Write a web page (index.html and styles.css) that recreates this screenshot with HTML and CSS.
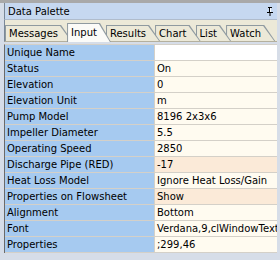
FILE: index.html
```html
<!DOCTYPE html>
<html>
<title>Data Palette</title>

<head>
    <link rel="stylesheet" href="styles.css">
</head>

<body>

    <div class="palette">
        <div class="titlebar">
            <span class="title">Data Palette</span>
            <svg class="pin" width="6" height="9" viewBox="0 0 6 9">
                <path d="M1 0h4v1h-1v4h2v1h-2.5v3h-1v-3h-2.5v-1h2v-4h-1z" fill="#000"/>
                <rect x="3" y="1" width="1" height="4" fill="#fff"/>
            </svg>
        </div>

        <div class="tabs">
            <div class="tab">Messages</div>
            <div class="tab active">Input</div>
            <div class="tab">Results</div>
            <div class="tab">Chart</div>
            <div class="tab">List</div>
            <div class="tab">Watch</div>
        </div>

        <!-- property grid -->
        <div class="grid">
            <div class="name">Unique Name</div><div class="value blank"></div>
            <div class="name">Status</div><div class="value">On</div>
            <div class="name">Elevation</div><div class="value">0</div>
            <div class="name">Elevation Unit</div><div class="value">m</div>
            <div class="name">Pump Model</div><div class="value">8196 2x3x6</div>
            <div class="name">Impeller Diameter</div><div class="value">5.5</div>
            <div class="name">Operating Speed</div><div class="value">2850</div>
            <div class="name">Discharge Pipe (RED)</div><div class="value hot">-17</div>
            <div class="name">Heat Loss Model</div><div class="value">Ignore Heat Loss/Gain</div>
            <div class="name">Properties on Flowsheet</div><div class="value hot">Show</div>
            <div class="name">Alignment</div><div class="value">Bottom</div>
            <div class="name">Font</div><div class="value">Verdana,9,clWindowText</div>
            <div class="name">Properties</div><div class="value">;299,46</div>
        </div>
    </div>

</body>

</html>
```

FILE: styles.css
```css
* {
    box-sizing: border-box;
}

body {
    margin: 0;
    background: #ffffff;
    font-family: "DejaVu Sans", Verdana, sans-serif;
    font-size: 10px;
    color: #000;
}

.palette {
    width: 280px;
    height: 260px;
    background: #d6dde8;
    border-top: 3px solid #a9a9a9;
    padding-left: 4px;
    padding-right: 3px;
    overflow: hidden;
}

/* Title bar */

.titlebar {
    display: flex;
    align-items: center;
    justify-content: space-between;
    height: 17px;
    padding: 0 4px 0 3px;
    background: #c6d8f0;
    border-left: 1px solid #7a8898;
    border-bottom: 1px solid #b0bccc;
}

.pin {
    display: block;
}

/* Tabs */

.tabs {
    display: flex;
    align-items: flex-end;
    height: 22px;
    background: #ece9d8;
    border-left: 1px solid #7a8898;
    border-bottom: 1px solid #b4b09e;
}

.tab {
    position: relative;
    height: 16px;
    line-height: 15px;
    padding: 1px 14px 0 4px;
    margin-right: -5px;
    white-space: nowrap;
}

.tab::before,
.tab::after {
    content: "";
    position: absolute;
    z-index: -1;
    clip-path: polygon(0 0, calc(100% - 11px) 0, 100% 100%, 0 100%);
}

.tab::before {
    inset: 0;
    background: #8f9aa0;
}

.tab::after {
    inset: 1px 1px 0 1px;
    background: #ece9d8;
}

.tab:nth-child(1) { z-index: 6; }
.tab:nth-child(2) { z-index: 5; }
.tab:nth-child(3) { z-index: 4; }
.tab:nth-child(4) { z-index: 3; }
.tab:nth-child(5) { z-index: 2; }
.tab:nth-child(6) { z-index: 1; }

.tab.active {
    z-index: 9;
    height: 19px;
    line-height: 18px;
    margin-bottom: -1px;
}

.tab.active::after {
    background: #fbfbf8;
}

/* Property grid */

.grid {
    display: grid;
    grid-template-columns: 150px 1fr;
    margin-top: 2px;
    border-left: 1px solid #6a6a6a;
    border-top: 1px solid #d4d0c8;
}

.name,
.value {
    height: 16px;
    line-height: 15px;
    padding-left: 2px;
    border-bottom: 1px solid #d4d0c8;
    white-space: nowrap;
    overflow: hidden;
}

.name {
    background: #a6caf0;
    border-right: 1px solid #d4d0c8;
}

.value {
    background: #fffbf0;
}

.value.blank {
    background: #ffffff;
}

.value.hot {
    background: #fbead8;
}
```
